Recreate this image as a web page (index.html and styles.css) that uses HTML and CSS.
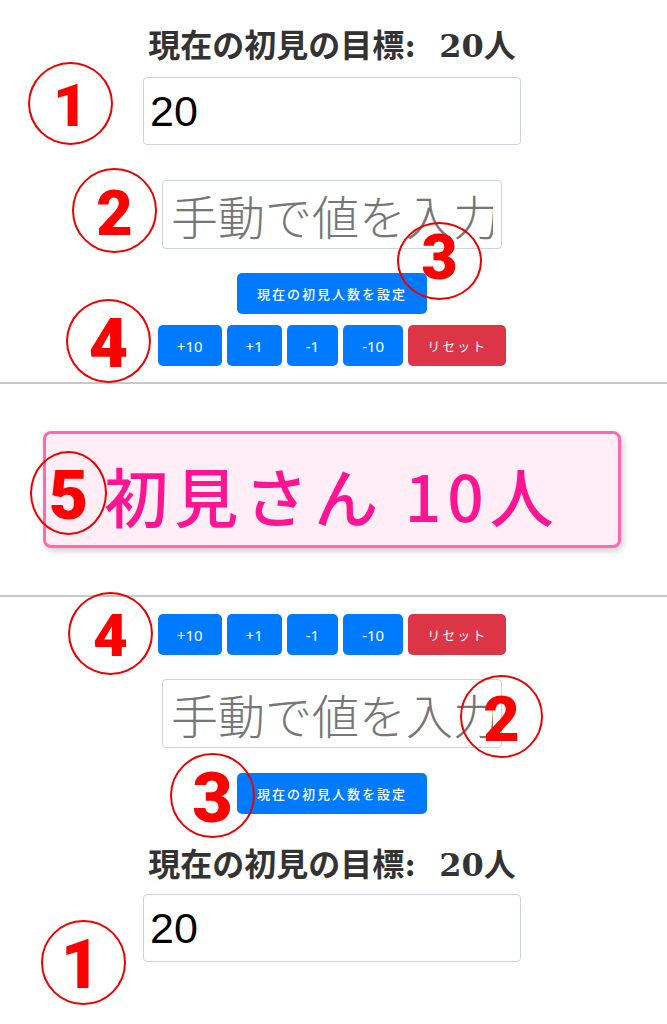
FILE: index.html
```html
<!DOCTYPE html>
<html lang="ja">
<head>
<meta charset="utf-8">
<title>初見カウンター</title>
<link rel="stylesheet" href="styles.css">
</head>
<body>
<div class="page">
  <section class="panel panel-top">
    <h2 class="goal-title">現在の初見の目標: 20人</h2>
    <input class="goal-input" type="text" value="20">
    <input class="manual-input" type="text" placeholder="手動で値を入力">
    <button class="btn btn-primary btn-set">現在の初見人数を設定</button>
    <div class="btn-row">
      <button class="btn btn-primary btn-step">+10</button>
      <button class="btn btn-primary btn-step">+1</button>
      <button class="btn btn-primary btn-step">-1</button>
      <button class="btn btn-primary btn-step">-10</button>
      <button class="btn btn-danger btn-reset">リセット</button>
    </div>
  </section>

  <hr class="divider">

  <div class="display-wrap">
    <div class="display">初見さん 10人</div>
  </div>

  <hr class="divider">

  <section class="panel panel-bottom">
    <div class="btn-row">
      <button class="btn btn-primary btn-step">+10</button>
      <button class="btn btn-primary btn-step">+1</button>
      <button class="btn btn-primary btn-step">-1</button>
      <button class="btn btn-primary btn-step">-10</button>
      <button class="btn btn-danger btn-reset">リセット</button>
    </div>
    <input class="manual-input" type="text" placeholder="手動で値を入力">
    <button class="btn btn-primary btn-set">現在の初見人数を設定</button>
    <h2 class="goal-title">現在の初見の目標: 20人</h2>
    <input class="goal-input" type="text" value="20">
  </section>

  <div class="mark mark-1a">1</div>
  <div class="mark mark-2a">2</div>
  <div class="mark mark-3a">3</div>
  <div class="mark mark-4a">4</div>
  <div class="mark mark-5">5</div>
  <div class="mark mark-4b">4</div>
  <div class="mark mark-2b">2</div>
  <div class="mark mark-3b">3</div>
  <div class="mark mark-1b">1</div>
</div>
</body>
</html>
```
FILE: styles.css
```css
* { box-sizing: border-box; }

html, body {
  margin: 0;
  padding: 0;
  background: #ffffff;
}

body {
  font-family: "Noto Sans", "Noto Sans CJK JP", sans-serif;
}

.page {
  position: relative;
  width: 667px;
  min-height: 1024px;
  overflow: hidden;
}

/* ---------- control panels ---------- */
.panel {
  display: flex;
  flex-direction: column;
  align-items: center;
  padding-right: 3px;
}

.panel-top {
  padding-top: 28px;
  padding-bottom: 16px;
}

.goal-title {
  margin: 0;
  font-family: "DejaVu Serif", "Noto Sans CJK JP", serif;
  font-weight: 700;
  font-size: 32px;
  line-height: 36px;
  word-spacing: 12px;
  color: #333333;
}

.goal-input {
  width: 378px;
  height: 68px;
  margin-top: 13px;
  padding: 0 6px;
  border: 1px solid #ced4da;
  border-radius: 4px;
  background: #ffffff;
  font-family: "Liberation Sans", Arial, sans-serif;
  font-size: 43px;
  color: #000000;
  outline: none;
}

.panel-bottom .goal-input { margin-top: 11px; }

.manual-input {
  width: 340px;
  height: 69px;
  padding: 0 8px;
  border: 1px solid #ced4da;
  border-radius: 4px;
  background: #ffffff;
  font-family: "Noto Sans CJK JP", sans-serif;
  font-weight: 300;
  font-size: 47px;
  color: #000000;
  outline: none;
}

.manual-input::placeholder { color: #767676; }

.panel-top .manual-input { margin-top: 35px; }
.panel-top .btn-set { margin-top: 24px; }
.panel-top .btn-row { margin-top: 11px; }

.panel-bottom .btn-row { margin-top: 17px; }
.panel-bottom .manual-input { margin-top: 24px; }
.panel-bottom .btn-set { margin-top: 25px; }
.panel-bottom .goal-title { margin-top: 33px; }

/* ---------- buttons ---------- */
.btn {
  height: 41px;
  border: 0;
  border-radius: 5px;
  color: #ffffff;
  font-family: "Noto Sans", "Noto Sans CJK JP", sans-serif;
  font-weight: 400;
  cursor: pointer;
}

.btn-primary { background: #007bff; }
.btn-danger { background: #dc3545; }

.btn-set {
  padding: 0 20px;
  font-size: 13px;
  font-weight: 500;
  letter-spacing: 2px;
}

.btn-row {
  display: flex;
  gap: 5px;
}

.btn-step {
  padding: 0 19px;
  font-size: 15px;
}

.btn-reset {
  padding: 0 19px;
  font-size: 13px;
  letter-spacing: 2px;
}

/* ---------- dividers ---------- */
.divider {
  margin: 0;
  height: 0;
  border: 0;
  border-top: 2px solid #c8c8c8;
}

/* ---------- big display ---------- */
.display-wrap {
  display: flex;
  justify-content: center;
  padding: 47px 3px 47px 0;
}

.display {
  width: 578px;
  height: 117px;
  display: flex;
  align-items: center;
  justify-content: center;
  padding-top: 9px;
  border: 3px solid #ff69b4;
  border-radius: 8px;
  background: #ffeef5;
  box-shadow: 2px 3px 6px rgba(0, 0, 0, 0.2);
  color: #ff1493;
  font-family: "Noto Sans CJK JP", sans-serif;
  font-weight: 500;
  font-size: 64px;
  line-height: 1;
  letter-spacing: 6px;
  white-space: pre;
}

/* ---------- annotation marks (overlay) ---------- */
.mark {
  position: absolute;
  display: flex;
  align-items: center;
  justify-content: center;
  padding-top: 5px;
  border: 2.5px solid #ee0000;
  border-radius: 50%;
  color: #ff0000;
  font-family: "Roboto", "Open Sans", "Noto Sans", sans-serif;
  font-weight: 900;
  line-height: 1;
}

.mark-1a { left: 28px;  top: 62px;  width: 85px; height: 83px; font-size: 60px; }
.mark-2a { left: 72px;  top: 168px; width: 85px; height: 85px; font-size: 63px; }
.mark-3a { left: 397px; top: 222px; width: 85px; height: 78px; font-size: 63px; padding-top: 0; padding-bottom: 7px; }
.mark-4a { left: 66px;  top: 299px; width: 85px; height: 84px; font-size: 68px; }
.mark-5  { left: 30px;  top: 451px; width: 77px; height: 84px; font-size: 68px; }
.mark-4b { left: 68px;  top: 592px; width: 85px; height: 83px; font-size: 60px; }
.mark-2b { left: 460px; top: 675px; width: 83px; height: 83px; font-size: 63px; }
.mark-3b { left: 170px; top: 753px; width: 85px; height: 85px; font-size: 70px; }
.mark-1b { left: 41px;  top: 920px; width: 85px; height: 85px; font-size: 68px; padding-right: 6px; }
```
